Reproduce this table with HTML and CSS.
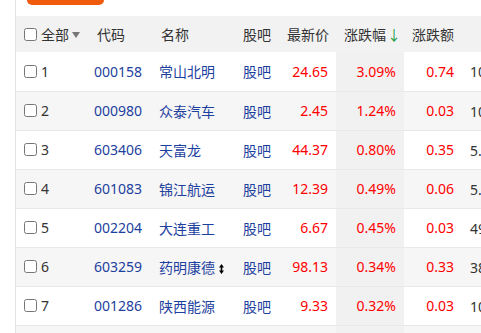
FILE: index.html
```html
<!DOCTYPE html>
<html lang="zh-CN">
<head>
<meta charset="utf-8">
<link rel="stylesheet" href="styles.css">
</head>
<body>
<div class="panel">
  <div class="toolbar"><span class="btn"></span></div>
  <table class="quotes">
    <colgroup>
      <col class="c-sel"><col class="c-code"><col class="c-name"><col class="c-bar">
      <col class="c-price"><col class="c-pct"><col class="c-chg"><col class="c-vol">
    </colgroup>
    <thead>
      <tr>
        <th class="sel"><label class="all"><input type="checkbox"><span>全部</span><span class="tri"></span></label></th>
        <th class="code">代码</th>
        <th class="name">名称</th>
        <th class="bar">股吧</th>
        <th class="num">最新价</th>
        <th class="num sorted">涨跌幅<span class="down">↓</span></th>
        <th class="num">涨跌额</th>
        <th class="vol"></th>
      </tr>
    </thead>
    <tbody>
      <tr><td class="sel"><label><input type="checkbox"><span>1</span></label></td><td class="code">000158</td><td class="name">常山北明</td><td class="bar">股吧</td><td class="num up">24.65</td><td class="num up sorted">3.09%</td><td class="num up">0.74</td><td class="vol">106.8万</td></tr>
      <tr><td class="sel"><label><input type="checkbox"><span>2</span></label></td><td class="code">000980</td><td class="name">众泰汽车</td><td class="bar">股吧</td><td class="num up">2.45</td><td class="num up sorted">1.24%</td><td class="num up">0.03</td><td class="vol">103.2万</td></tr>
      <tr><td class="sel"><label><input type="checkbox"><span>3</span></label></td><td class="code">603406</td><td class="name">天富龙</td><td class="bar">股吧</td><td class="num up">44.37</td><td class="num up sorted">0.80%</td><td class="num up">0.35</td><td class="vol">5.12万</td></tr>
      <tr><td class="sel"><label><input type="checkbox"><span>4</span></label></td><td class="code">601083</td><td class="name">锦江航运</td><td class="bar">股吧</td><td class="num up">12.39</td><td class="num up sorted">0.49%</td><td class="num up">0.06</td><td class="vol">5.63万</td></tr>
      <tr><td class="sel"><label><input type="checkbox"><span>5</span></label></td><td class="code">002204</td><td class="name">大连重工</td><td class="bar">股吧</td><td class="num up">6.67</td><td class="num up sorted">0.45%</td><td class="num up">0.03</td><td class="vol">49.7万</td></tr>
      <tr><td class="sel"><label><input type="checkbox"><span>6</span></label></td><td class="code">603259</td><td class="name">药明康德<svg class="sort-ico" width="5" height="10" viewBox="0 0 5 10"><path d="M2.5 0 L5 3.5 H3.3 V6.5 H5 L2.5 10 L0 6.5 H1.7 V3.5 H0 Z" fill="#000"/></svg></td><td class="bar">股吧</td><td class="num up">98.13</td><td class="num up sorted">0.34%</td><td class="num up">0.33</td><td class="vol">38.4万</td></tr>
      <tr><td class="sel"><label><input type="checkbox"><span>7</span></label></td><td class="code">001286</td><td class="name">陕西能源</td><td class="bar">股吧</td><td class="num up">9.33</td><td class="num up sorted">0.32%</td><td class="num up">0.03</td><td class="vol">10.9万</td></tr>
      <tr><td class="sel"><label><input type="checkbox"><span>8</span></label></td><td class="code">600000</td><td class="name">浦发银行</td><td class="bar">股吧</td><td class="num up">10.12</td><td class="num up sorted">0.30%</td><td class="num up">0.03</td><td class="vol">10.2万</td></tr>
    </tbody>
  </table>
</div>
</body>
</html>
```
FILE: styles.css
```css
html, body {
  margin: 0;
  padding: 0;
  background: #fff;
  overflow: hidden;
}
body {
  font-family: "Noto Sans", "Noto Sans CJK SC", sans-serif;
  font-size: 14px;
  color: #333;
}
.panel {
  margin-left: 15px;
  border-left: 1px solid #e3e3e3;
  width: 700px;
  min-height: 333px;
}
.toolbar {
  height: 16px;
  padding-left: 11px;
}
.btn {
  display: block;
  width: 77px;
  height: 5px;
  background: #f05a0c;
  border-radius: 0 0 10px 10px;
}
.quotes {
  border-collapse: collapse;
  table-layout: fixed;
  width: 524px;
}
.c-sel { width: 70px; }
.c-code { width: 65px; }
.c-name { width: 84px; }
.c-bar { width: 44px; }
.c-price { width: 57px; }
.c-pct { width: 68px; }
.c-chg { width: 58px; }
.c-vol { width: 78px; }

th, td {
  padding: 0 8px;
  white-space: nowrap;
  text-align: left;
  vertical-align: middle;
  overflow: hidden;
}
thead tr {
  height: 36px;
  background: #f2f2f2;
}
th {
  font-weight: normal;
  color: #333;
}
tbody tr {
  height: 39px;
  border-bottom: 1px solid #e9e9e9;
}
tbody tr:nth-child(even) {
  background: #f6f6f6;
}
tbody td.sorted {
  background: #f1f1f1;
}
label {
  display: flex;
  align-items: center;
}
input[type="checkbox"] {
  margin: 0 4px 0 0;
  width: 13px;
  height: 13px;
}
.tri {
  width: 0;
  height: 0;
  margin-left: 3px;
  margin-top: 2px;
  border-left: 4px solid transparent;
  border-right: 4px solid transparent;
  border-top: 6px solid #777;
}
th.code { padding-left: 11px; }
th.name { padding-left: 10px; }
td.code, td.name, td.bar {
  color: #1d3f9e;
}
.num {
  text-align: right;
}
.up {
  color: #ff0000;
}
.down {
  color: #1f9d45;
  margin-left: 1px;
}
.sort-ico {
  margin-left: 4px;
  vertical-align: -1px;
}
td.vol {
  color: #333;
}
```
